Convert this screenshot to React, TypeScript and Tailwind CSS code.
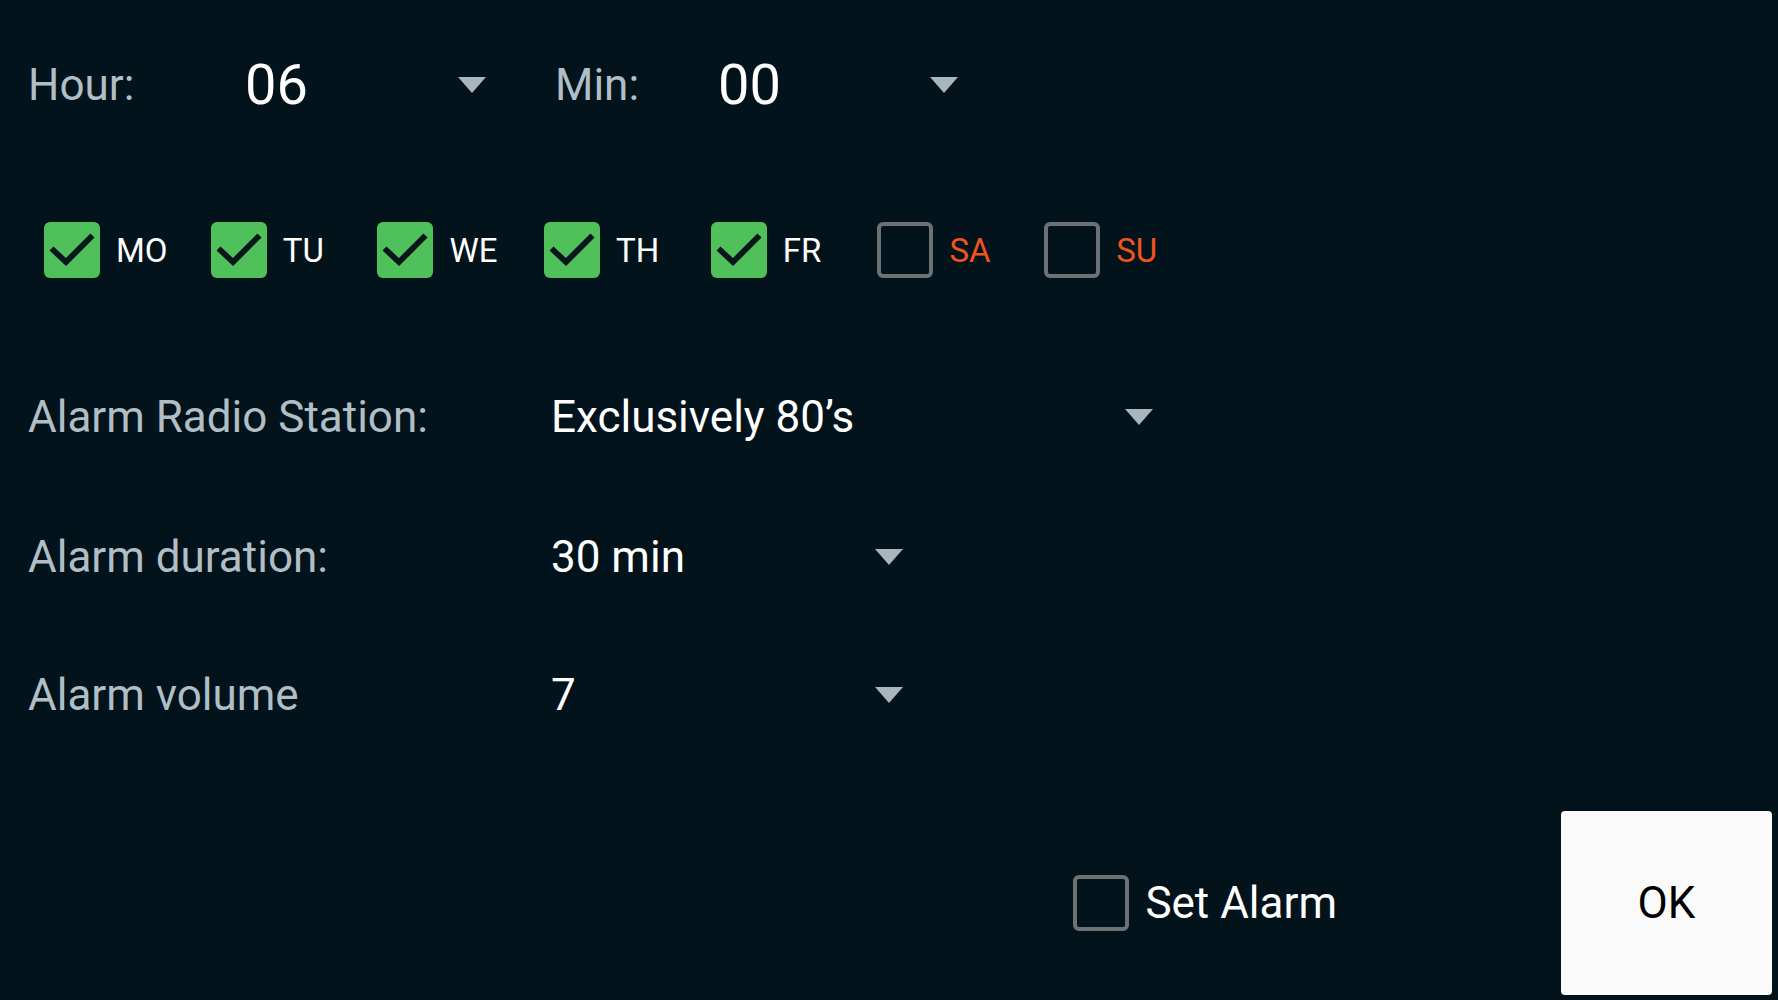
import React, { useState } from 'react';

const DAYS: { id: string; weekend?: boolean }[] = [
  { id: 'MO' },
  { id: 'TU' },
  { id: 'WE' },
  { id: 'TH' },
  { id: 'FR' },
  { id: 'SA', weekend: true },
  { id: 'SU', weekend: true },
];

const Caret = () => (
  <svg width="28" height="16" viewBox="0 0 28 16" className="shrink-0">
    <path d="M0 0h28L14 16z" fill="#a9b6bc" />
  </svg>
);

const Box = ({ checked, onClick }: { checked: boolean; onClick?: () => void }) =>
  checked ? (
    <button onClick={onClick} className="w-[56px] h-[56px] shrink-0 rounded-[6px] bg-[#50c05a]">
      <svg width="56" height="56" viewBox="0 0 56 56">
        <path d="M7.5 26.5L22 40L48.5 13.5" fill="none" stroke="#07171c" strokeWidth={5.8} />
      </svg>
    </button>
  ) : (
    <button
      onClick={onClick}
      className="w-[56px] h-[56px] shrink-0 rounded-[6px] border-[4px] border-[#6c7175] bg-transparent"
    />
  );

// value + caret, caret pinned to the right edge of the field
const Select = ({ value, width, big }: { value: string; width: string; big?: boolean }) => (
  <div className={`flex items-center justify-between ${width}`}>
    <span className={`${big ? 'text-[56px]' : 'text-[44px]'} leading-none text-white`}>{value}</span>
    <Caret />
  </div>
);

const Label = ({ children, width }: { children: React.ReactNode; width: string }) => (
  <span className={`${width} shrink-0 text-[44px] leading-none text-[#b0bec5]`}>{children}</span>
);

const App: React.FC = () => {
  const [days, setDays] = useState<Record<string, boolean>>({
    MO: true,
    TU: true,
    WE: true,
    TH: true,
    FR: true,
    SA: false,
    SU: false,
  });
  const [armed, setArmed] = useState(false);

  return (
    <div
      className="w-full h-screen overflow-hidden bg-[#02131b] flex flex-col"
      style={{ fontFamily: 'Roboto, "Noto Sans", sans-serif' }}
    >
      {/* time */}
      <div className="h-[170px] shrink-0 flex items-center pl-[28px]">
        <Label width="w-[217px]">Hour:</Label>
        <Select value="06" width="w-[241px]" big />
        <span className="ml-[69px]" />
        <Label width="w-[163px]">Min:</Label>
        <Select value="00" width="w-[240px]" big />
      </div>

      {/* weekdays */}
      <div className="h-[160px] shrink-0 flex items-center pl-[44px]">
        {DAYS.map((d) => (
          <div key={d.id} className="w-[166.7px] shrink-0 flex items-center gap-[16px]">
            <Box checked={days[d.id]} onClick={() => setDays({ ...days, [d.id]: !days[d.id] })} />
            <span
              className={`text-[33px] leading-none ${d.weekend ? 'text-[#f0541e]' : 'text-white'}`}
            >
              {d.id}
            </span>
          </div>
        ))}
      </div>

      <div className="h-[174px] shrink-0 flex items-center pl-[28px]">
        <Label width="w-[523px]">Alarm Radio Station:</Label>
        <Select value="Exclusively 80’s" width="w-[602px]" />
      </div>

      <div className="h-[106px] shrink-0 flex items-center pl-[28px]">
        <Label width="w-[523px]">Alarm duration:</Label>
        <Select value="30 min" width="w-[352px]" />
      </div>

      <div className="h-[170px] shrink-0 flex items-center pl-[28px]">
        <Label width="w-[523px]">Alarm volume</Label>
        <Select value="7" width="w-[352px]" />
      </div>

      {/* footer */}
      <div className="h-[220px] shrink-0 flex justify-end pt-[31px] pb-[5px] pr-[6px]">
        <div className="self-center flex items-center gap-[16px] mr-[224px]">
          <Box checked={armed} onClick={() => setArmed(!armed)} />
          <span className="text-[44px] leading-none text-white">Set Alarm</span>
        </div>
        <button className="w-[211px] h-[184px] rounded-[4px] bg-[#fafafa] text-[44px] leading-none text-black">
          OK
        </button>
      </div>
    </div>
  );
};

export default App;
